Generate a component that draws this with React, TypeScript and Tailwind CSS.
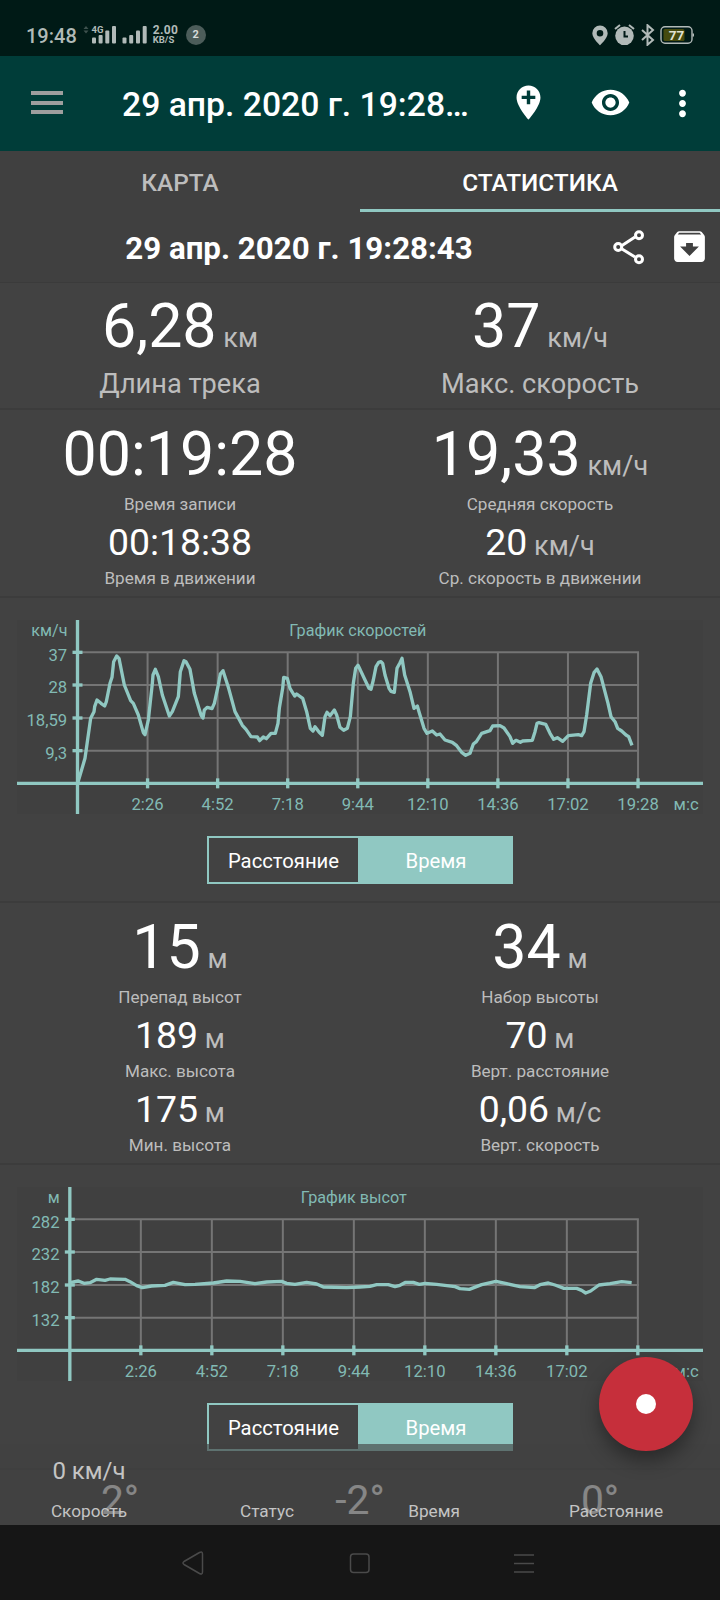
import React from 'react';
import { MdArchive, MdMoreVert, MdVisibility } from 'react-icons/md';

type Point = [number, number];

interface ChartProps {
  title: string;
  yUnit: string;
  yLabels: string[];
  originX: number;
  step: number;
  points: Point[];
}

interface StatProps {
  value: string;
  unit?: string;
  label: string;
  size: 'lead' | 'big' | 'mid';
}

const ROWS = [157, 255, 354, 452];
const AXIS_Y = 550;
const TIMES = ['2:26', '4:52', '7:18', '9:44', '12:10', '14:36', '17:02', '19:28'];

const speedPoints: Point[] = [
  [233, 550], [255, 475], [272, 355], [282, 335], [284, 320], [291, 300], [303, 310], [314, 318], [319, 305],
  [330, 250], [336, 232], [341, 185], [350, 168], [357, 175], [373, 255], [392, 302], [400, 310], [415, 345],
  [430, 398], [435, 404], [445, 360], [457, 250], [459, 225], [466, 208], [475, 230], [487, 285], [508, 348],
  [517, 335], [535, 290], [541, 215], [552, 182], [558, 185], [570, 208], [583, 280], [603, 345], [609, 354],
  [613, 330], [622, 322], [636, 326], [643, 310], [655, 255], [661, 222], [669, 212], [686, 265], [705, 335],
  [716, 355], [727, 376], [738, 388], [753, 410], [772, 411], [779, 422], [790, 411], [799, 416], [813, 400],
  [826, 400], [834, 370], [838, 325], [848, 265], [851, 232], [862, 235], [870, 265], [884, 288], [890, 282],
  [908, 295], [920, 335], [931, 385], [939, 393], [945, 380], [957, 396], [967, 406], [975, 350], [981, 337],
  [990, 347], [1003, 330], [1010, 345], [1020, 382], [1031, 391], [1042, 385], [1051, 350], [1060, 250],
  [1067, 205], [1074, 196], [1080, 208], [1095, 240], [1107, 265], [1113, 268], [1120, 240], [1128, 200],
  [1136, 187], [1143, 185], [1148, 190], [1155, 225], [1167, 265], [1173, 274], [1183, 277], [1191, 205],
  [1200, 188], [1206, 175], [1214, 225], [1230, 275], [1242, 325], [1252, 318], [1257, 335], [1272, 385],
  [1281, 400], [1297, 393], [1310, 405], [1320, 402], [1335, 420], [1357, 427], [1370, 437], [1386, 458],
  [1397, 466], [1410, 460], [1420, 432], [1429, 425], [1445, 400], [1470, 392], [1478, 378], [1500, 377],
  [1512, 384], [1530, 410], [1538, 430], [1548, 421], [1561, 427], [1568, 423], [1597, 421], [1605, 395],
  [1611, 370], [1617, 368], [1637, 373], [1650, 400], [1661, 418], [1672, 413], [1688, 424], [1705, 407],
  [1735, 404], [1745, 407], [1752, 395], [1760, 345], [1772, 250], [1782, 218], [1791, 207], [1803, 230],
  [1824, 310], [1833, 350], [1845, 365], [1853, 385], [1865, 393], [1878, 405], [1886, 410], [1896, 436],
];

const altitudePoints: Point[] = [
  [210, 347], [235, 342], [252, 349], [270, 347], [290, 337], [315, 340], [330, 336], [375, 337], [390, 344],
  [410, 356], [427, 362], [455, 357], [495, 355], [520, 346], [555, 353], [585, 352], [640, 348], [680, 342],
  [720, 343], [765, 350], [800, 345], [845, 343], [860, 349], [885, 352], [920, 346], [950, 351], [970, 360],
  [1040, 362], [1080, 360], [1110, 358], [1130, 353], [1165, 353], [1185, 359], [1200, 355], [1217, 346],
  [1240, 346], [1258, 352], [1275, 349], [1310, 352], [1365, 359], [1380, 365], [1408, 367], [1445, 353],
  [1488, 343], [1520, 350], [1560, 359], [1603, 362], [1620, 353], [1645, 348], [1665, 354], [1692, 364],
  [1730, 364], [1745, 370], [1757, 378], [1772, 372], [1797, 354], [1830, 350], [1865, 344], [1895, 347],
];

const Chart: React.FC<ChartProps> = ({ title, yUnit, yLabels, originX, step, points }) => {
  const right = originX + step * 8;
  const ticks = TIMES.map((_, i) => originX + step * (i + 1));
  return (
    <svg
      width="686"
      height="194"
      viewBox="51 60 2058 582"
      className="block bg-[#404040]"
      fill="#82bab4"
      fontSize="50"
      fontFamily="Roboto, sans-serif"
    >
      <g stroke="#757575" strokeWidth="6">
        {ROWS.map(y => <line key={y} x1={originX} x2={right + 3} y1={y} y2={y} />)}
        {ticks.map(x => <line key={x} x1={x} x2={x} y1={157} y2={AXIS_Y} />)}
      </g>
      <g stroke="#90c8c2" strokeWidth="10">
        <line x1="51" x2="2109" y1={AXIS_Y} y2={AXIS_Y} />
        <line x1={originX} x2={originX} y1="60" y2="642" />
        {ROWS.map(y => <line key={y} x1={originX - 15} x2={originX + 15} y1={y} y2={y} />)}
        {ticks.map(x => <line key={x} x1={x} x2={x} y1={AXIS_Y - 15} y2={AXIS_Y + 15} />)}
      </g>
      <polyline
        points={points.map(p => p.join(',')).join(' ')}
        fill="none"
        stroke="#90c8c2"
        strokeWidth="10"
        strokeLinejoin="round"
      />
      <text x={ticks[3]} y="108" textAnchor="middle" fontSize="48.5">{title}</text>
      <text x={originX - 30} y="108" textAnchor="end" fontSize="48.5">{yUnit}</text>
      {yLabels.map((l, i) => <text key={l} x={originX - 31} y={ROWS[i] + 24.5} textAnchor="end">{l}</text>)}
      {TIMES.map((t, i) => <text key={t} x={ticks[i]} y="630" textAnchor="middle">{t}</text>)}
      <text x="2096" y="630" textAnchor="end">м:с</text>
    </svg>
  );
};

const Toggle: React.FC = () => (
  <div className="mx-auto flex h-12 w-[306px] border-2 border-[#90c8c2] text-[20.3px] text-white">
    <button className="w-[149px] pt-[2px]">Расстояние</button>
    <button className="flex-1 bg-[#90c8c2] pt-[2px] pl-[3px]">Время</button>
  </div>
);

const ChartSection: React.FC<ChartProps> = props => (
  <section className="h-[305px] border-b-2 border-[#3c3c3c] px-[17px] pt-[22px]">
    <Chart {...props} />
    <div className="pt-[22px]"><Toggle /></div>
  </section>
);

const valueStyles = {
  lead: 'h-[70px] text-[60.9px] leading-[72px]',
  big: 'h-[70px] text-[60.9px] leading-[72px]',
  mid: 'mt-1 h-11 text-[37.4px] leading-[44px]',
};

const labelStyles = {
  lead: 'mt-[5px] text-[27.2px] leading-[36px]',
  big: 'mt-[3px] text-[17.1px] leading-6',
  mid: 'mt-[2px] text-[17.1px] leading-6',
};

const Stat: React.FC<StatProps> = ({ value, unit, label, size }) => (
  <div className="whitespace-nowrap text-center">
    <div className={valueStyles[size]}>
      <span className="text-white">{value}</span>
      {unit && <span className="text-[27.1px] leading-none text-[#bdbdbd]"> {unit}</span>}
    </div>
    <div className={`text-[#bdbdbd] ${labelStyles[size]}`}>{label}</div>
  </div>
);

const StatusBar: React.FC = () => (
  <div className="flex h-14 items-center bg-[#001a16] pl-[26px] pr-[26px] pt-[14px] text-[#b1bab8]">
    <span className="pt-[2px] text-[20px] font-medium leading-none">19:48</span>
    <svg width="66" height="20" viewBox="0 0 66 20" className="ml-[4px]" fill="currentColor">
      <path d="M2.5 4l2.500-3 2.500 3zM2.500 5.500l2.500 3 2.500-3z" opacity=".35" />
      <text x="10.500" y="7.800" fontSize="9.500" fontWeight="700" fontFamily="Roboto, sans-serif">4G</text>
      <rect x="11" y="12.500" width="4" height="6" rx="1" />
      <rect x="17.600" y="10" width="4" height="8.500" rx="1" />
      <rect x="24.300" y="5.500" width="4" height="13" rx="1" />
      <rect x="31" y="1" width="4" height="17.500" rx="1" />
      <rect x="41.500" y="12.500" width="4" height="6" rx="1" />
      <rect x="48.200" y="10" width="4" height="8.500" rx="1" />
      <rect x="55" y="5.500" width="4" height="13" rx="1" />
      <rect x="61.700" y="1" width="4" height="17.500" rx="1" />
    </svg>
    <div className="ml-[6px] w-[26px] whitespace-nowrap font-bold">
      <div className="text-[12px] leading-[10px] tracking-[0.3px]">2.00</div>
      <div className="text-[9.5px] leading-[10px]">KB/S</div>
    </div>
    <div className="ml-[7px] flex h-5 w-5 items-center justify-center rounded-full bg-[#4c5d5a] text-[11px] font-bold text-[#d5dcda]">2</div>

    <svg width="102" height="22" viewBox="0 0 102 22" className="ml-auto" fill="currentColor">
      <path fillRule="evenodd" d="M8 1.500a7.700 7.700 0 0 0-7.700 7.700c0 5 7.700 12 7.700 12s7.700-7 7.700-12a7.700 7.700 0 0 0-7.700-7.700zM8 6a3.300 3.300 0 1 1 0 6.600 3.300 3.300 0 0 1 0-6.600z" />
      <circle cx="32.500" cy="11.800" r="9.300" />
      <path d="M23 5l5-4M42 5l-5-4" stroke="currentColor" strokeWidth="2" />
      <path d="M32.500 7v5.500h3.500" fill="none" stroke="#001a16" strokeWidth="2" />
      <path d="M50 6l11 10-5.500 4.800V1.200L61 6 50 16" fill="none" stroke="currentColor" strokeWidth="2" />
      <rect x="69" y="2.800" width="31" height="16.500" rx="4" fill="none" stroke="currentColor" strokeWidth="1.400" />
      <rect x="71.500" y="5" width="21" height="12" rx="1.500" fill="#454a0e" />
      <path d="M100.500 9.500h1.500v3h-1.500z" />
      <text x="84.500" y="15.800" textAnchor="middle" fontSize="13.500" fontWeight="700" fill="#e0e3d2" fontFamily="Roboto, sans-serif">77</text>
    </svg>
  </div>
);

const AppBar: React.FC = () => (
  <header className="flex h-[95px] items-center bg-[#003d39] text-white">
    <div className="-mt-[2px] ml-[31px] flex w-8 flex-col gap-[5.5px]">
      <div className="h-1 bg-[#9e9e9e]" />
      <div className="h-1 bg-[#9e9e9e]" />
      <div className="h-1 bg-[#9e9e9e]" />
    </div>
    <h1 className="ml-[59px] w-[386px] whitespace-nowrap pt-[2px] text-[33.7px] font-medium leading-none">29 апр. 2020 г. 19:28…</h1>
    <svg width="41" height="41" viewBox="0 0 24 24" fill="currentColor" className="-mt-[2px]">
      <path d="M12 2C8.140 2 5 5.140 5 9c0 5.250 7 13 7 13s7-7.750 7-13c0-3.860-3.140-7-7-7zm4 8h-3v3h-2v-3H8V8h3V5h2v3h3v2z" />
    </svg>
    <MdVisibility className="-mt-[2px] ml-[41px] size-[41px]" />
    <MdMoreVert className="ml-[31px] size-[41px]" />
  </header>
);

const bottomItems = [
  { label: 'Скорость', value: '0 км/ч' },
  { label: 'Статус', value: '' },
  { label: 'Время', value: '' },
  { label: 'Расстояние', value: '' },
];

const App: React.FC = () => {
  return (
    <div className="flex h-[1600px] w-[720px] flex-col overflow-hidden bg-[#424242] font-[Roboto,sans-serif]">
      <StatusBar />
      <AppBar />

      <nav className="grid h-[61px] grid-cols-2 bg-[#404040] text-center text-[24.4px] font-medium leading-[64px]">
        <div className="h-[61px] text-[#bdbdbd]">КАРТА</div>
        <div className="h-[61px] border-b-[3px] border-[#90c8c2] text-white">СТАТИСТИКА</div>
      </nav>

      <div className="flex h-[71px] items-center border-b border-[#3b3b3b] bg-[#404040] text-white">
        <h2 className="w-[598px] pt-[5px] text-center text-[31.3px] font-bold">29 апр. 2020 г. 19:28:43</h2>
        <svg width="34" height="38" viewBox="0 0 34 38" className="-mt-[1px] ml-[13px]" fill="none" stroke="currentColor" strokeWidth="3">
          <path d="M11 17.500L24 9M11 21l13 8" />
          <circle cx="7.200" cy="19" r="3.500" />
          <circle cx="28" cy="7.200" r="3.500" />
          <circle cx="28" cy="31.200" r="3.500" />
        </svg>
        <MdArchive className="-mt-[1px] ml-[24px] size-[41px]" />
      </div>

      <main className="relative h-[1242px] overflow-hidden">
        <section className="grid h-[127px] grid-cols-2 border-b-2 border-[#3c3c3c] pt-[8px]">
          <Stat size="lead" value="6,28" unit="км" label="Длина трека" />
          <Stat size="lead" value="37" unit="км/ч" label="Макс. скорость" />
        </section>

        <section className="grid h-[188px] grid-cols-2 content-start border-b-2 border-[#3c3c3c] pt-[9px]">
          <Stat size="big" value="00:19:28" label="Время записи" />
          <Stat size="big" value="19,33" unit="км/ч" label="Средняя скорость" />
          <Stat size="mid" value="00:18:38" label="Время в движении" />
          <Stat size="mid" value="20" unit="км/ч" label="Ср. скорость в движении" />
        </section>

        <ChartSection
          title="График скоростей"
          yUnit="км/ч"
          yLabels={['37', '28', '18,59', '9,3']}
          originX={232.5}
          step={210.2}
          points={speedPoints}
        />

        <section className="grid h-[262px] grid-cols-2 content-start border-b-2 border-[#3c3c3c] pt-[9px]">
          <Stat size="big" value="15" unit="м" label="Перепад высот" />
          <Stat size="big" value="34" unit="м" label="Набор высоты" />
          <Stat size="mid" value="189" unit="м" label="Макс. высота" />
          <Stat size="mid" value="70" unit="м" label="Верт. расстояние" />
          <Stat size="mid" value="175" unit="м" label="Мин. высота" />
          <Stat size="mid" value="0,06" unit="м/с" label="Верт. скорость" />
        </section>

        <ChartSection
          title="График высот"
          yUnit="м"
          yLabels={['282', '232', '182', '132']}
          originX={209.5}
          step={213}
          points={altitudePoints}
        />

        <section className="grid grid-cols-3 pt-[5px] text-center text-[40.8px] leading-[50px] text-white">
          <div>2°</div>
          <div>-2°</div>
          <div>0°</div>
        </section>

        <div className="absolute bottom-0 left-0 grid h-[81px] w-full grid-cols-[178px_178px_156px_208px] bg-[#424242]/64 pt-[11px] text-center text-[#c4c4c4]">
          {bottomItems.map(item => (
            <div key={item.label}>
              <div className="h-11 text-[24px] leading-[32px]">{item.value}</div>
              <div className="text-[17.2px] leading-6">{item.label}</div>
            </div>
          ))}
        </div>

        <button className="absolute bottom-[74.5px] right-[27.5px] flex size-[94px] items-center justify-center rounded-full bg-[#c62f3b] shadow-[0_10px_18px_rgba(0,0,0,0.35)]">
          <span className="size-5 rounded-full bg-white" />
        </button>
      </main>

      <footer className="h-[75px] bg-[#161616]">
        <svg width="720" height="75" fill="none" stroke="#4a4a4a" strokeWidth="1.500" strokeLinejoin="round">
          <path d="M184 36.500q-2 1.500 0 3l15.500 9q3 1.500 3-1.500V29q0-3-3-1.500z" />
          <rect x="350.500" y="29" width="18.500" height="18.500" rx="3" />
          <path d="M514 30h20M514 38.500h20M514 47h20" />
        </svg>
      </footer>
    </div>
  );
};

export default App;
